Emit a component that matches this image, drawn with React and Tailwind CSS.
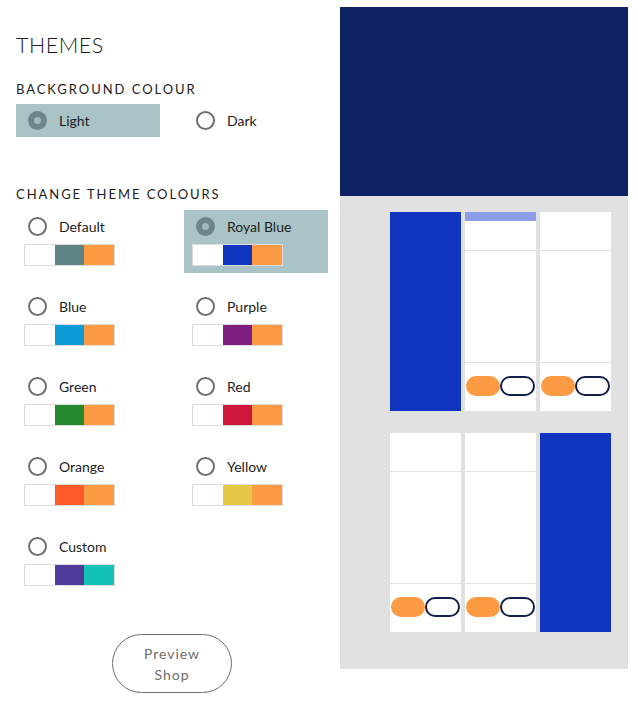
import React, { useState } from 'react';

const themes = [
    { name: 'Default', colours: ['#ffffff', '#5f8387', '#fd9a44'] },
    { name: 'Royal Blue', colours: ['#ffffff', '#1035be', '#fd9a44'] },
    { name: 'Blue', colours: ['#ffffff', '#0d9bd8', '#fd9a44'] },
    { name: 'Purple', colours: ['#ffffff', '#7e1d80', '#fd9a44'] },
    { name: 'Green', colours: ['#ffffff', '#25882f', '#fd9a44'] },
    { name: 'Red', colours: ['#ffffff', '#cf173d', '#fd9a44'] },
    { name: 'Orange', colours: ['#ffffff', '#ff5a27', '#fd9a44'] },
    { name: 'Yellow', colours: ['#ffffff', '#e7c844', '#fd9a44'] },
    { name: 'Custom', colours: ['#ffffff', '#4f3c9a', '#13c3b7'] },
];

function Radio({ checked }) {
    if (checked) {
        return (
            <span className="w-[19px] h-[19px] rounded-full bg-[#6b878d] flex items-center justify-center shrink-0">
                <span className="w-[7px] h-[7px] rounded-full bg-[#a3b9bd]" />
            </span>
        );
    }
    return <span className="w-[19px] h-[19px] rounded-full border-2 border-[#6e6e6e] bg-white shrink-0" />;
}

function Swatch({ colours }) {
    return (
        <div className="flex w-[91px] h-[22px] border border-[#dcdcdc]">
            {colours.map((c, i) => (
                <div key={i} className="flex-1" style={{ background: c }} />
            ))}
        </div>
    );
}

function PreviewCard({ bar }) {
    return (
        <div className="w-[71px] h-[199px] bg-white flex flex-col">
            <div className="h-[39px] border-b border-[#e2e2e2]">
                {bar && <div className="h-[9px] bg-[#8a9de6]" />}
            </div>
            <div className="flex-1 border-b border-[#e2e2e2]" />
            <div className="h-[48px] flex items-center justify-between px-px pb-[2px]">
                <span className="w-[34px] h-[20px] rounded-full bg-[#fd9a44]" />
                <span className="w-[35px] h-[20px] rounded-full border-2 border-[#13204a]" />
            </div>
        </div>
    );
}

export default function App() {
    const [bg, setBg] = useState('Light');
    const [theme, setTheme] = useState('Royal Blue');

    return (
        <div className="w-[638px] h-[701px] bg-white flex font-['Lato',sans-serif] text-[#1c1c1c]">
            {/* Settings */}
            <div className="w-[340px] shrink-0 pl-4 pt-[31px] flex flex-col">
                <h1 className="text-[21.5px] font-light tracking-[0.5px] leading-[28px]">THEMES</h1>

                <h2 className="mt-[22px] text-[13px] tracking-[1.95px] leading-4">BACKGROUND COLOUR</h2>
                <div className="mt-[7px] flex">
                    {['Light', 'Dark'].map(opt => (
                        <button
                            key={opt}
                            onClick={() => setBg(opt)}
                            className={`w-[144px] h-[33px] mr-[24px] shrink-0 flex items-center gap-[12px] pl-[12px] text-[14px] ${bg === opt ? 'bg-[#a9c3c7]' : ''}`}
                        >
                            <Radio checked={bg === opt} />
                            <span>{opt}</span>
                        </button>
                    ))}
                </div>

                <h2 className="mt-[49px] text-[13px] tracking-[1.95px] leading-4">CHANGE THEME COLOURS</h2>
                <div className="mt-[8px] grid grid-cols-[168px_144px] gap-y-[17px]">
                    {themes.map(t => (
                        <button
                            key={t.name}
                            onClick={() => setTheme(t.name)}
                            className={`w-[144px] h-[63px] flex flex-col items-start pl-[8px] pt-[7px] text-[14px] ${theme === t.name ? 'bg-[#a9c3c7]' : ''}`}
                        >
                            <div className="flex items-center gap-[12px] pl-[4px] h-[19px]">
                                <Radio checked={theme === t.name} />
                                <span>{t.name}</span>
                            </div>
                            <div className="mt-[8px]">
                                <Swatch colours={t.colours} />
                            </div>
                        </button>
                    ))}
                </div>

                <div className="mt-[41px] pl-[96px]">
                    <button className="w-[120px] h-[59px] rounded-full border border-[#6d6d6d] text-[#6d6d6d] text-[14px] tracking-[1px] leading-[21px]">
                        Preview<br />Shop
                    </button>
                </div>
            </div>

            {/* Preview */}
            <div className="w-[288px] mt-[7px] h-[662px] flex flex-col">
                <div className="h-[189px] bg-[#0e2160]" />
                <div className="flex-1 bg-[#e1e1e1] pl-[50px] pt-[16px] flex flex-col gap-[22px]">
                    <div className="flex gap-[4px]">
                        <div className="w-[71px] h-[199px] bg-[#1035be]" />
                        <PreviewCard bar />
                        <PreviewCard />
                    </div>
                    <div className="flex gap-[4px]">
                        <PreviewCard />
                        <PreviewCard />
                        <div className="w-[71px] h-[199px] bg-[#1035be]" />
                    </div>
                </div>
            </div>
        </div>
    );
}
